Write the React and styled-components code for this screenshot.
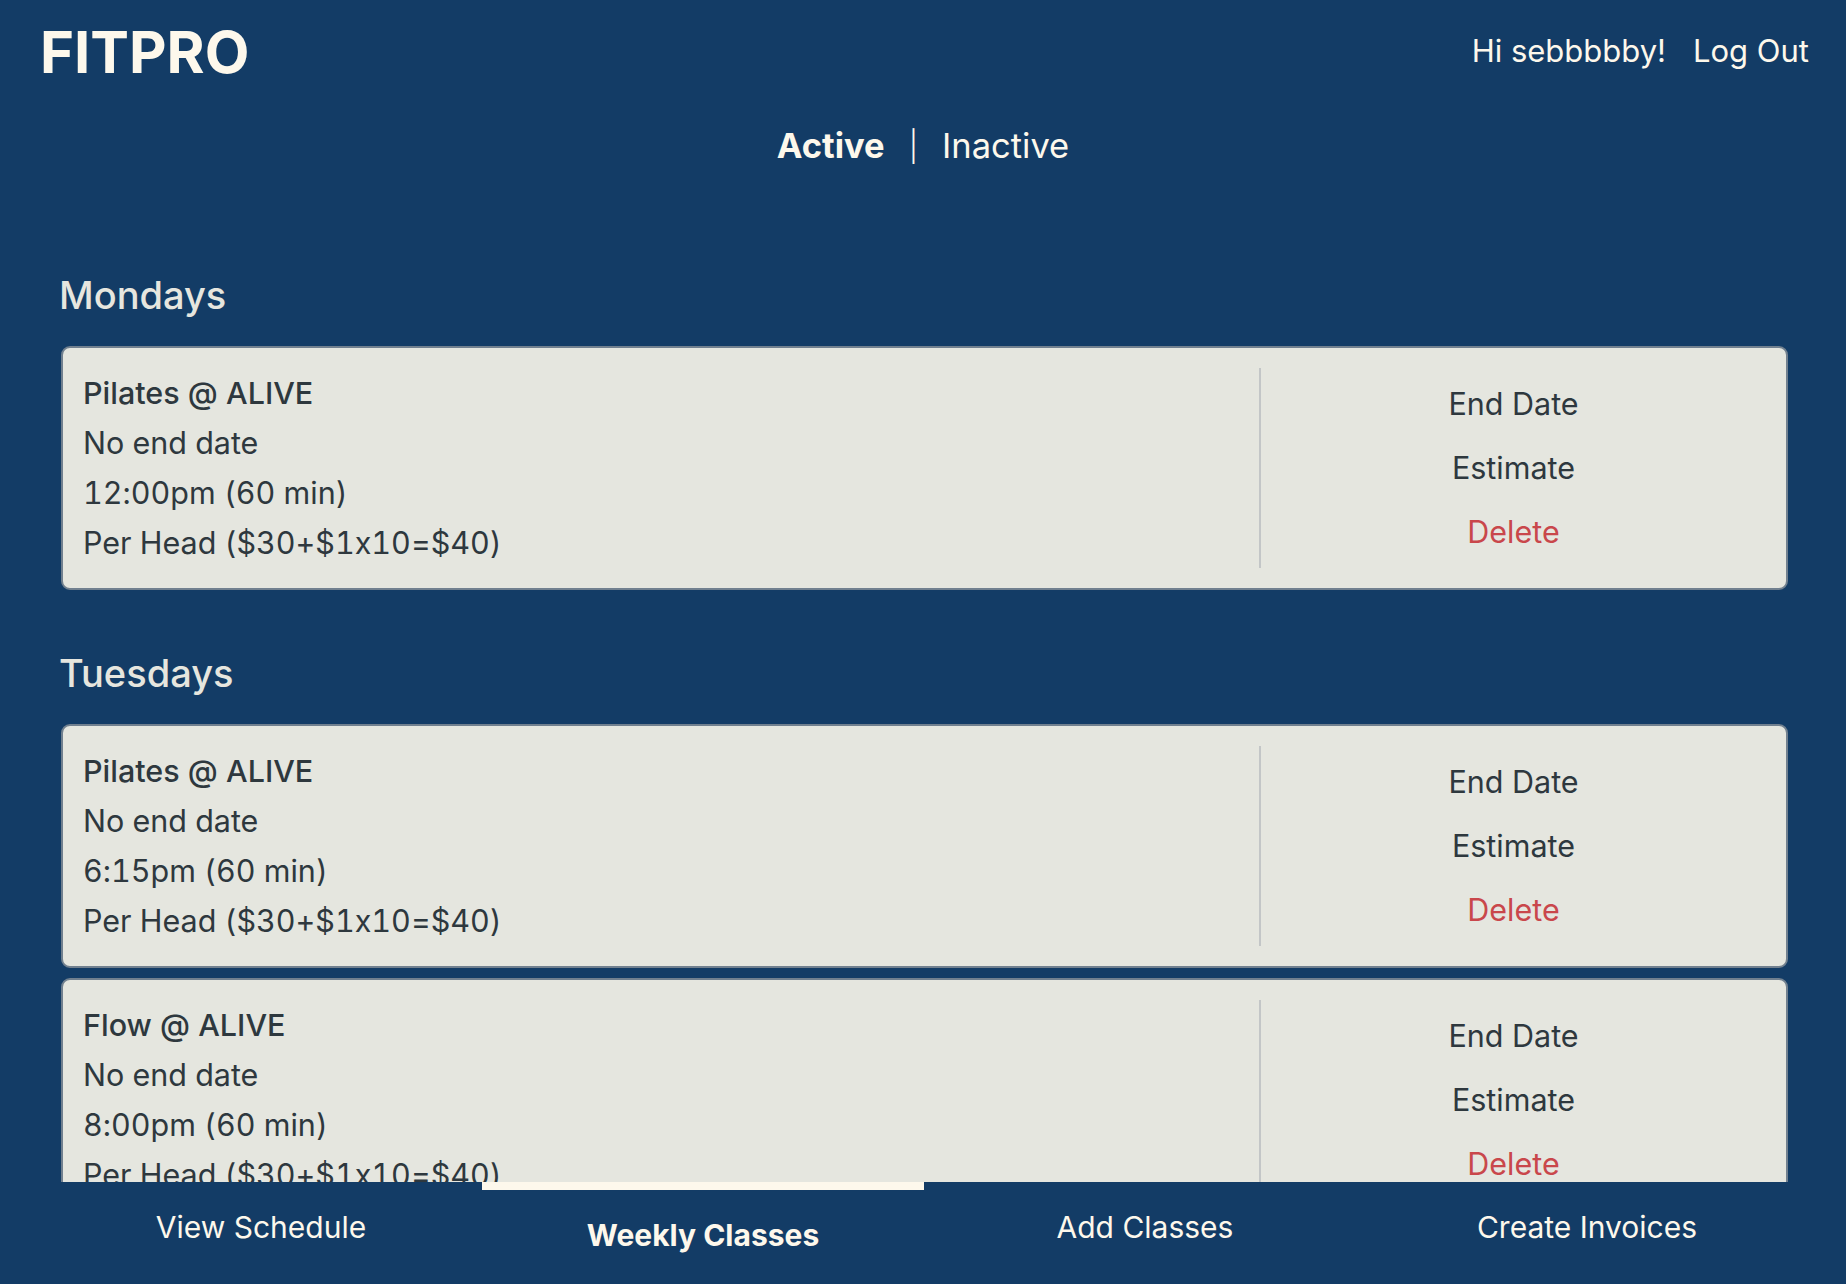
import React from 'react';
import styled, { createGlobalStyle } from 'styled-components';

const GlobalStyle = createGlobalStyle`
  html, body {
    margin: 0;
    padding: 0;
    height: 100%;
    background: #133c66;
  }
  body {
    font-family: Inter, 'Open Sans', sans-serif;
    font-feature-settings: 'calt' 0;
    overflow: hidden;
  }
  #root {
    height: 100%;
  }
`;

const schedule = [
  {
    day: 'Mondays',
    classes: [
      { name: 'Pilates @ ALIVE', end: 'No end date', time: '12:00pm (60 min)', rate: 'Per Head ($30+$1x10=$40)' },
    ],
  },
  {
    day: 'Tuesdays',
    classes: [
      { name: 'Pilates @ ALIVE', end: 'No end date', time: '6:15pm (60 min)', rate: 'Per Head ($30+$1x10=$40)' },
      { name: 'Flow @ ALIVE', end: 'No end date', time: '8:00pm (60 min)', rate: 'Per Head ($30+$1x10=$40)' },
    ],
  },
];

const navItems = ['View Schedule', 'Weekly Classes', 'Add Classes', 'Create Invoices'];

const App = () => {
  return (
    <Page>
      <GlobalStyle />
      <Header>
        <Logo>FITPRO</Logo>
        <UserBox>
          <span>Hi sebbbbby!</span>
          <span>Log Out</span>
        </UserBox>
      </Header>
      <Tabs>
        <Tab active>Active</Tab>
        <Sep>|</Sep>
        <Tab>Inactive</Tab>
      </Tabs>
      <Main>
        {schedule.map((group) => (
          <DaySection key={group.day}>
            <DayTitle>{group.day}</DayTitle>
            {group.classes.map((c, i) => (
              <Card key={i}>
                <Info>
                  <ClassName>{c.name}</ClassName>
                  <Line>{c.end}</Line>
                  <Line>{c.time}</Line>
                  <Line>{c.rate}</Line>
                </Info>
                <Actions>
                  <Action>End Date</Action>
                  <Action>Estimate</Action>
                  <Action danger>Delete</Action>
                </Actions>
              </Card>
            ))}
          </DaySection>
        ))}
      </Main>
      <Nav>
        {navItems.map((item) => (
          <NavItem key={item} active={item === 'Weekly Classes'}>
            {item}
          </NavItem>
        ))}
      </Nav>
    </Page>
  );
};

const Page = styled.div`
  height: 100vh;
  display: flex;
  flex-direction: column;
  background: #133c66;
  color: #fdf8ec;
`;

const Header = styled.header`
  display: flex;
  justify-content: space-between;
  align-items: flex-start;
  padding: 17px 37px 0 40px;
`;

const Logo = styled.h1`
  margin: 0;
  font-size: 58px;
  line-height: 70px;
  font-weight: 700;
  color: #fdf8ec;
`;

const UserBox = styled.div`
  display: flex;
  gap: 27px;
  font-size: 31px;
  line-height: 68px;
`;

const Tabs = styled.div`
  display: flex;
  justify-content: center;
  align-items: center;
  gap: 24px;
  font-size: 34.5px;
  line-height: 44px;
  margin-top: 37px;
`;

const Tab = styled.span`
  font-weight: ${(p) => (p.active ? 700 : 400)};
`;

const Sep = styled.span`
  font-weight: 300;
  font-size: 30px;
`;

const Main = styled.main`
  flex: 1;
  overflow: hidden;
  padding: 104px 58px 0 61px;
`;

const DaySection = styled.section`
  margin-bottom: 60px;
`;

const DayTitle = styled.h2`
  margin: 0 0 28px -2px;
  font-size: 38px;
  line-height: 46px;
  font-weight: 500;
  color: #e6e6df;
`;

const Card = styled.div`
  display: flex;
  background: #e5e6df;
  border: 2px solid #71808f;
  border-radius: 9px;
  padding: 20px 20px;
  margin-bottom: 10px;
  color: #2e383e;
`;

const Info = styled.div`
  flex: 1;
  display: flex;
  flex-direction: column;
`;

const Line = styled.div`
  font-size: 30.5px;
  line-height: 50px;
  font-feature-settings: 'calt' 0, 'tnum' 1;
`;

const ClassName = styled(Line)`
  font-weight: 520;
`;

const Actions = styled.div`
  flex: 0 0 505px;
  display: flex;
  flex-direction: column;
  justify-content: center;
  align-items: center;
  border-left: 2px solid #c3c6c7;
`;

const Action = styled.div`
  font-size: 30.5px;
  line-height: 64px;
  color: ${(p) => (p.danger ? '#c9474b' : '#2e383e')};
`;

const Nav = styled.nav`
  flex: 0 0 102px;
  display: grid;
  grid-template-columns: repeat(4, 1fr);
  padding: 0 38px 0 40px;
  background: #133c66;
`;

const NavItem = styled.div`
  text-align: center;
  padding-top: 24px;
  font-size: 30px;
  line-height: 42px;
  font-weight: ${(p) => (p.active ? 700 : 400)};
  border-top: ${(p) => (p.active ? '8px solid #fdf8ec' : 'none')};
`;

export default App;
